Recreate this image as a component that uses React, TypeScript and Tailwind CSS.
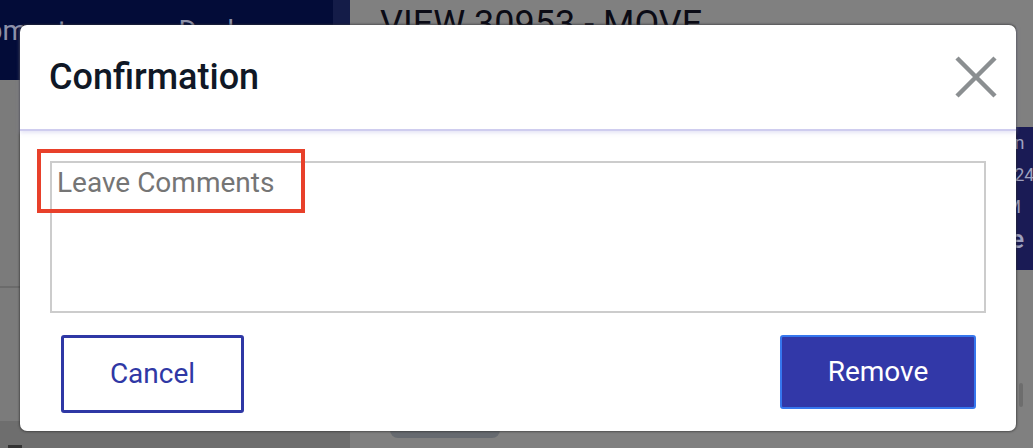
import React from 'react'

function CloseIcon() {
  return (
    <svg width="42" height="42" viewBox="0 0 42 42" fill="none">
      <path d="M2 2L40 40M40 2L2 40" stroke="#8b8f91" strokeWidth="4.5" />
    </svg>
  )
}

export default function App() {
  return (
    <div className="relative h-[448px] w-[1033px] overflow-hidden bg-[#808080] font-['Roboto',sans-serif]">
      {/* page behind the dimmed overlay */}
      <div className="flex h-full">
        <div className="flex h-full w-[350px] flex-col">
          <div className="flex h-[80px]">
            <div className="flex w-[333px] gap-[112px] overflow-hidden bg-[#030c38] pt-[10px] text-[28px] text-[#8d91a8]">
              <span className="-ml-[52px]">Shipment</span>
              <span>Dock</span>
            </div>
            <div className="w-[17px] bg-[#141c48]" />
          </div>
          <div className="h-[208px] border-b-2 border-[#6b6b6b] bg-[#7b7b7b]" />
          <div className="flex-1 bg-[#7b7b7b]" />
          <div className="relative h-[27px] bg-[#6e6e6e]">
            <div className="absolute bottom-0 left-[8px] h-[3px] w-[14px] bg-[#333]" />
          </div>
        </div>
        <div className="relative flex-1">
          <div className="pl-[30px] pt-[2px] text-[36px] leading-[44px] text-[#0b0b15]">VIEW 30953 - MOVE</div>
          <div className="absolute right-0 top-[127px] flex h-[143px] w-[30px] flex-col bg-[#1a1b55] pl-[3px] text-[18px] leading-[32px] text-[#9ea1bf]">
            <span className="-ml-[12px]">Sun</span>
            <span className="-ml-[12px]">2024</span>
            <span className="-ml-[12px]">PM</span>
            <span className="-ml-[12px] text-[26px] font-medium">Re</span>
          </div>
          <div className="absolute right-[10px] top-[383px] h-[24px] w-[4px] rounded-sm bg-[#6d6d6d]" />
          <div className="absolute bottom-[10px] left-[40px] h-[16px] w-[110px] rounded-full bg-[#666a70]" />
        </div>
      </div>

      {/* dialog */}
      <div className="absolute left-[20px] top-[25px] flex h-[406px] w-[996px] flex-col rounded-[7px] bg-white shadow-[0_0_2px_1px_rgba(40,40,40,0.55)]">
        <div className="flex h-[106px] items-center justify-between border-b-2 border-[#cfcdef] pl-[29px] pr-[19px] shadow-[0_2px_4px_rgba(180,178,230,0.35)]">
          <h2 className="text-[36px] font-medium text-[#101826]">Confirmation</h2>
          <CloseIcon />
        </div>
        <div className="px-[30px] pt-[30px]">
          <textarea
            placeholder="Leave Comments"
            className="block h-[152px] w-full resize-none border-2 border-[#cccccc] px-[5px] pt-[2px] text-[28px] leading-[36px] text-[#333] outline-none placeholder:text-[#757575]"
          />
        </div>
        <div className="flex justify-between pl-[41px] pr-[40px] pt-[22px]">
          <button className="h-[78px] w-[183px] rounded-[3px] border-[3px] border-[#2f38a5] text-[28px] text-[#2f38a5]">
            Cancel
          </button>
          <button className="h-[74px] w-[196px] rounded-[3px] border-2 border-[#3677ee] bg-[#3238a8] text-[28px] text-white">
            Remove
          </button>
        </div>
      </div>

      {/* annotation */}
      <div className="absolute left-[37px] top-[149px] h-[64px] w-[268px] border-4 border-[#e8402a]" />
    </div>
  )
}
